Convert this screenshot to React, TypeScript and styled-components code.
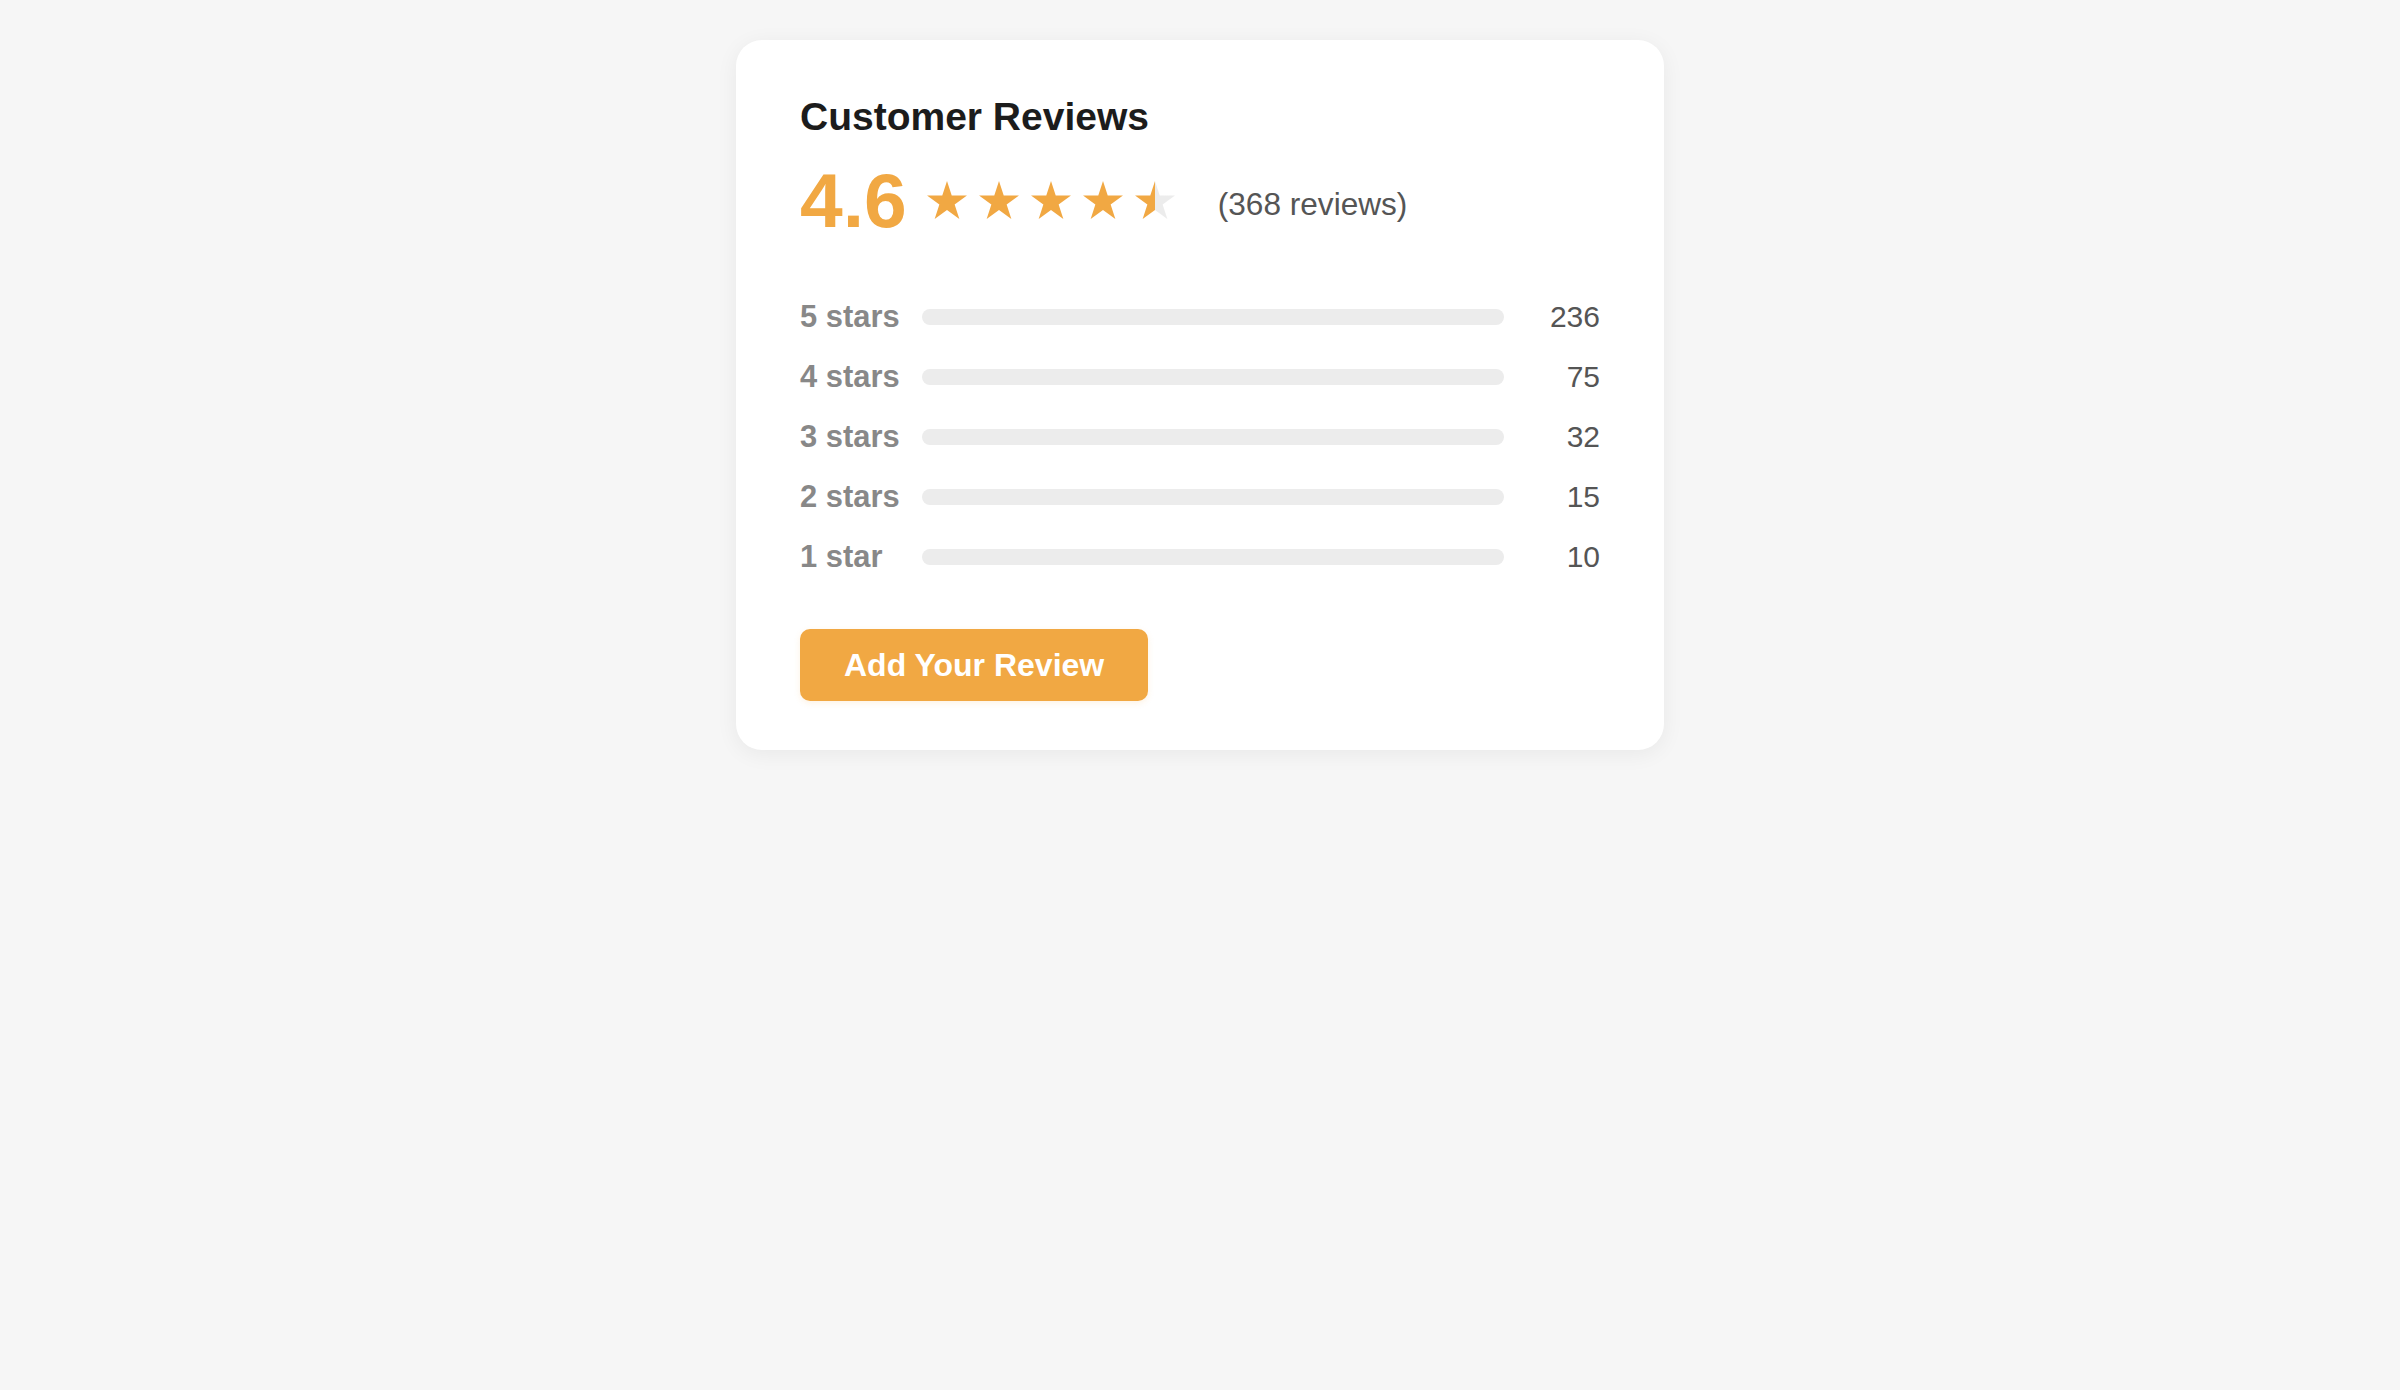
import React from "react";
import styled, { createGlobalStyle } from "styled-components";

const GlobalStyle = createGlobalStyle`
  html, body {
    margin: 0;
    padding: 0;
    background: #f6f6f6;
    font-family: "Liberation Sans", Arial, sans-serif;
  }
  * { box-sizing: border-box; }
`;

const ORANGE = "#f1a843";
const TRACK = "#ececec";

const Page = styled.div`
  min-height: 1390px;
  padding-top: 40px;
`;

const Card = styled.section`
  width: 928px;
  margin: 0 auto;
  background: #ffffff;
  border-radius: 26px;
  padding: 55px 64px 49px;
  box-shadow: 0 4px 22px rgba(0, 0, 0, 0.06);
`;

const Title = styled.h2`
  margin: 0;
  font-size: 39px;
  line-height: 44px;
  font-weight: 700;
  color: #1c1c1c;
`;

const RatingRow = styled.div`
  display: flex;
  align-items: center;
  margin-top: 23px;
`;

const Score = styled.span`
  font-size: 76.8px;
  line-height: 76.8px;
  font-weight: 700;
  color: ${ORANGE};
`;

const Stars = styled.div`
  display: flex;
  gap: 12px;
  margin-left: 20px;
`;

const ReviewCount = styled.span`
  margin-left: 43px;
  padding-top: 7px;
  font-size: 31.6px;
  line-height: 36.8px;
  color: #555555;
`;

const Breakdown = styled.div`
  display: flex;
  flex-direction: column;
  gap: 16px;
  margin-top: 56px;
`;

const Row = styled.div`
  display: grid;
  grid-template-columns: 122px 1fr 96px;
  align-items: center;
  height: 44px;
`;

const Label = styled.span`
  font-size: 30.9px;
  line-height: 44px;
  font-weight: 700;
  color: #888888;
`;

const Track = styled.div`
  height: 16px;
  border-radius: 8px;
  background: ${TRACK};
  overflow: hidden;
`;

const Count = styled.span`
  font-size: 30px;
  line-height: 44px;
  color: #555555;
  text-align: right;
`;

const Button = styled.button`
  margin-top: 50px;
  height: 72px;
  padding: 0 44px;
  border: none;
  border-radius: 10px;
  background: ${ORANGE};
  color: #ffffff;
  font-family: "Liberation Sans", Arial, sans-serif;
  font-size: 32px;
  font-weight: 700;
  line-height: 36px;
  cursor: pointer;
  box-shadow: 0 2px 6px rgba(241, 168, 67, 0.15);
`;

const STAR_POINTS =
  "20,0 24.72,14.5 39.97,14.51 27.64,23.48 32.34,38 20,29.03 7.66,38 12.36,23.48 0.03,14.51 15.28,14.5";

type StarProps = { fill: "full" | "half" | "empty"; id: string };

const Star: React.FC<StarProps> = ({ fill, id }) => (
  <svg width="40" height="38" viewBox="0 0 40 38" aria-hidden="true">
    {fill === "half" && (
      <defs>
        <linearGradient id={id} x1="0" y1="0" x2="1" y2="0">
          <stop offset="50%" stopColor={ORANGE} />
          <stop offset="50%" stopColor={TRACK} />
        </linearGradient>
      </defs>
    )}
    <polygon
      points={STAR_POINTS}
      fill={fill === "full" ? ORANGE : fill === "half" ? `url(#${id})` : TRACK}
    />
  </svg>
);

const rows = [
  { label: "5 stars", count: 236 },
  { label: "4 stars", count: 75 },
  { label: "3 stars", count: 32 },
  { label: "2 stars", count: 15 },
  { label: "1 star", count: 10 },
];

const starFills: StarProps["fill"][] = ["full", "full", "full", "full", "half"];

export default function App() {
  return (
    <>
      <GlobalStyle />
      <Page>
        <Card>
          <Title>Customer Reviews</Title>
          <RatingRow>
            <Score>4.6</Score>
            <Stars>
              {starFills.map((f, i) => (
                <Star key={i} fill={f} id={`star-grad-${i}`} />
              ))}
            </Stars>
            <ReviewCount>(368 reviews)</ReviewCount>
          </RatingRow>
          <Breakdown>
            {rows.map((r) => (
              <Row key={r.label}>
                <Label>{r.label}</Label>
                <Track />
                <Count>{r.count}</Count>
              </Row>
            ))}
          </Breakdown>
          <Button>Add Your Review</Button>
        </Card>
      </Page>
    </>
  );
}
